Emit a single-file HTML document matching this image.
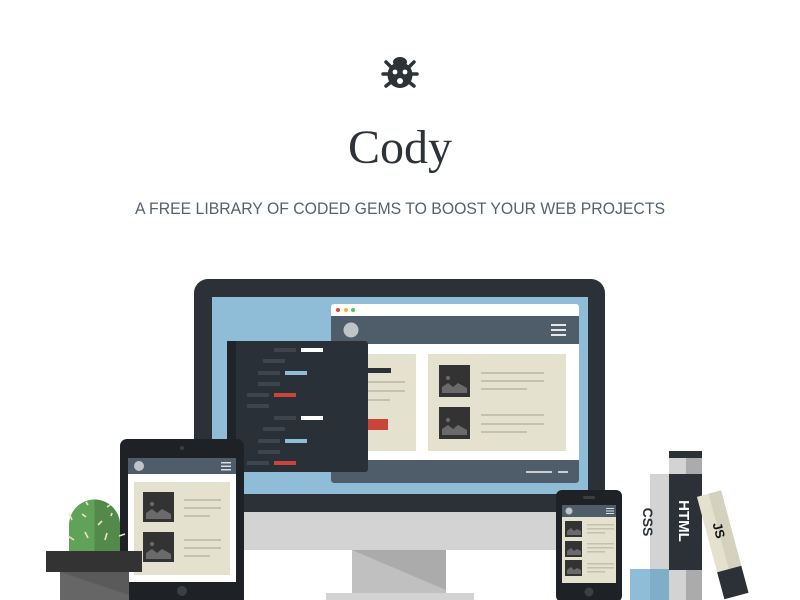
<!DOCTYPE html>
<html><head><meta charset="utf-8"><style>
html,body{margin:0;padding:0;background:#fff;width:800px;height:600px;overflow:hidden}
svg{display:block}
</style></head><body>
<svg width="800" height="600" viewBox="0 0 800 600" xmlns="http://www.w3.org/2000/svg">
<!-- bug icon -->
<g fill="#2d3339" stroke="#2d3339">
<ellipse cx="400" cy="62" rx="7" ry="5" stroke="none"/>
<ellipse cx="400" cy="75" rx="12.5" ry="13" stroke="none"/>
<g stroke-width="3.5" stroke-linecap="round">
<line x1="383" y1="74" x2="417" y2="74"/>
<line x1="386" y1="62" x2="391" y2="67"/><line x1="414" y1="62" x2="409" y2="67"/>
<line x1="386" y1="86" x2="391" y2="82"/><line x1="414" y1="86" x2="409" y2="82"/>
</g>
</g>
<circle cx="395" cy="72" r="2.4" fill="#fff"/><circle cx="405" cy="72" r="2.4" fill="#fff"/><circle cx="400" cy="81" r="3" fill="#fff"/>
<text x="400" y="163" text-anchor="middle" font-family="Liberation Serif, serif" font-size="48" fill="#2d3339">Cody</text>
<text x="135" y="214" textLength="530" lengthAdjust="spacingAndGlyphs" font-family="Liberation Sans, sans-serif" font-size="17" fill="#55616d">A FREE LIBRARY OF CODED GEMS TO BOOST YOUR WEB PROJECTS</text>

<!-- monitor -->
<rect x="326" y="593" width="148" height="7" fill="#d3d3d3"/>
<rect x="352" y="550" width="94" height="43" fill="#c0c0c0"/>
<polygon points="352,550 446,550 446,590" fill="#ababab"/>
<path d="M194,550 V293 a14,14 0 0 1 14,-14 H591 a14,14 0 0 1 14,14 V550 Z" fill="#2b3137"/>
<rect x="194" y="512" width="411" height="38" fill="#d3d3d3"/>
<rect x="212" y="297" width="376" height="197" fill="#8fbdd8"/>
<!-- browser -->
<rect x="331" y="304" width="248" height="179" rx="3" fill="#fff"/>
<circle cx="338" cy="310" r="2" fill="#e0463e"/><circle cx="346" cy="310" r="2" fill="#e8c02f"/><circle cx="353" cy="310" r="2" fill="#5fc04e"/>
<rect x="331" y="316" width="248" height="28" fill="#4f5d6b"/>
<circle cx="351" cy="330" r="7.5" fill="#bfc4c8"/>
<g fill="#e6e6e6"><rect x="551" y="324" width="15" height="2"/><rect x="551" y="329" width="15" height="2"/><rect x="551" y="334" width="15" height="2"/></g>
<path d="M331,460 H579 V480 a3,3 0 0 1 -3,3 H334 a3,3 0 0 1 -3,-3 Z" fill="#4f5d6b"/>
<rect x="526" y="471" width="26" height="2" fill="#c8cdd2"/><rect x="558" y="471" width="10" height="2" fill="#c8cdd2"/>
<rect x="340" y="354" width="76" height="97" fill="#e5e1cf"/>
<rect x="368" y="368" width="23" height="5" fill="#2b3137"/>
<g fill="#c4c0b2"><rect x="368" y="381" width="37" height="2"/><rect x="368" y="390" width="37" height="2"/><rect x="368" y="399" width="22" height="2"/></g>
<rect x="368" y="419" width="20" height="11" fill="#c9453a"/>
<rect x="428" y="354" width="138" height="97" fill="#e5e1cf"/>
<g id="img"><rect x="439" y="365" width="31" height="32" fill="#333"/><circle cx="448" cy="378" r="2" fill="#6a6a6a"/><path d="M442,393 V387 l6,-4 5,4 5,-4 9,5 V393 Z" fill="#6a6a6a"/></g>
<use href="#img" y="42"/>
<g fill="#c4c0b2"><rect x="481" y="372" width="63" height="2"/><rect x="481" y="380" width="63" height="2"/><rect x="481" y="388" width="46" height="2"/>
<rect x="481" y="414" width="63" height="2"/><rect x="481" y="423" width="63" height="2"/><rect x="481" y="431" width="46" height="2"/></g>
<!-- code -->
<rect x="227" y="341" width="141" height="131" rx="3" fill="#2a3038"/>
<rect x="227" y="341" width="9" height="131" fill="#1f2429"/>
<g fill="#3e454d"><rect x="274" y="348" width="22" height="4"/><rect x="263" y="359" width="22" height="4"/><rect x="258" y="371" width="22" height="4"/><rect x="258" y="382" width="22" height="4"/><rect x="247" y="393" width="22" height="4"/><rect x="247" y="404" width="22" height="4"/>
<rect x="274" y="416" width="22" height="4"/><rect x="263" y="427" width="22" height="4"/><rect x="258" y="439" width="22" height="4"/><rect x="258" y="450" width="22" height="4"/><rect x="247" y="461" width="22" height="4"/></g>
<rect x="301" y="348" width="22" height="4" fill="#fff"/><rect x="285" y="371" width="22" height="4" fill="#8fbdd8"/><rect x="274" y="393" width="22" height="4" fill="#c9453a"/>
<rect x="301" y="416" width="22" height="4" fill="#fff"/><rect x="285" y="439" width="22" height="4" fill="#8fbdd8"/><rect x="274" y="461" width="22" height="4" fill="#c9453a"/>

<!-- tablet -->
<rect x="120" y="439" width="124" height="170" rx="7" fill="#1e2226"/>
<circle cx="182" cy="448" r="2" fill="#3a3f44"/>
<rect x="128" y="458" width="108" height="124" fill="#fff"/>
<rect x="128" y="458" width="108" height="16" fill="#4f5d6b"/>
<circle cx="139" cy="466" r="5" fill="#bfc4c8"/>
<g fill="#d9dde0"><rect x="221" y="462" width="10" height="1.5"/><rect x="221" y="465.5" width="10" height="1.5"/><rect x="221" y="469" width="10" height="1.5"/></g>
<rect x="134" y="482" width="96" height="93" fill="#e5e1cf"/>
<g id="timg"><rect x="143" y="492" width="31" height="30" fill="#333"/><circle cx="152" cy="504" r="2" fill="#6a6a6a"/><path d="M146,519 V513 l6,-4 5,4 5,-4 9,5 V519 Z" fill="#6a6a6a"/></g>
<use href="#timg" y="40"/>
<g fill="#c4c0b2"><rect x="184" y="499" width="37" height="2"/><rect x="184" y="507" width="37" height="2"/><rect x="184" y="515" width="26" height="2"/>
<rect x="184" y="539" width="37" height="2"/><rect x="184" y="547" width="37" height="2"/><rect x="184" y="555" width="26" height="2"/></g>
<circle cx="182" cy="591" r="5" fill="#3a3f44"/>

<!-- cactus -->
<path d="M69,551 V525 a25.5,25.5 0 0 1 51,0 V551 Z" fill="#61a259"/>
<path d="M94.5,499.5 a25.5,25.5 0 0 1 25.5,25.5 V551 H94.5 Z" fill="#538a4c"/>
<g stroke="#ece4c8" stroke-width="1.6"><line x1="82" y1="514" x2="86" y2="517"/><line x1="98" y1="525" x2="102" y2="521"/><line x1="85" y1="532" x2="88" y2="538"/><line x1="107" y1="507" x2="110" y2="505"/><line x1="105" y1="540" x2="107" y2="533"/><line x1="111" y1="516" x2="112" y2="513"/><line x1="68" y1="536" x2="74" y2="540"/><line x1="69" y1="513" x2="72" y2="520"/><line x1="119" y1="536" x2="125" y2="534"/><line x1="86" y1="502" x2="88" y2="505"/></g>
<rect x="60" y="572" width="69" height="28" fill="#666"/>
<polygon points="60,572 129,572 129,595" fill="#5a5a5a"/>
<rect x="46" y="551" width="96" height="21" fill="#333"/>

<!-- phone -->
<rect x="556" y="490" width="66" height="112" rx="6" fill="#1e2226"/>
<rect x="583" y="496" width="12" height="3" rx="1.5" fill="#3a3f44"/>
<rect x="562" y="505" width="54" height="78" fill="#e5e1cf"/>
<rect x="562" y="505" width="54" height="12" fill="#4f5d6b"/>
<circle cx="569" cy="511" r="3.5" fill="#bfc4c8"/>
<g fill="#d9dde0"><rect x="606" y="508" width="8" height="1"/><rect x="606" y="510.5" width="8" height="1"/><rect x="606" y="513" width="8" height="1"/></g>
<g id="pimg"><rect x="565" y="521" width="17" height="16" fill="#333"/><path d="M567,535 V531 l4,-3 3,3 3,-2 4,2 V535 Z" fill="#6a6a6a"/></g>
<use href="#pimg" y="20"/><use href="#pimg" y="39"/>
<g fill="#c4c0b2"><rect x="587" y="524" width="27" height="1.5"/><rect x="587" y="528" width="27" height="1.5"/><rect x="587" y="532" width="18" height="1.5"/>
<rect x="587" y="543" width="27" height="1.5"/><rect x="587" y="547" width="27" height="1.5"/><rect x="587" y="551" width="18" height="1.5"/>
<rect x="587" y="563" width="27" height="1.5"/><rect x="587" y="567" width="27" height="1.5"/><rect x="587" y="571" width="18" height="1.5"/></g>
<circle cx="589" cy="592" r="4.5" fill="#3a3f44"/>

<!-- books -->
<rect x="650" y="474" width="19" height="96" fill="#d3d3d3"/>
<text transform="translate(643,522) rotate(90)" text-anchor="middle" font-family="Liberation Sans, sans-serif" font-weight="bold" font-size="14" fill="#2b3137">CSS</text>
<rect x="630" y="569" width="39" height="31" fill="#8fbdd8"/><rect x="650" y="569" width="19" height="31" fill="#80adc7"/>
<rect x="669" y="451" width="33" height="149" fill="#d3d3d3"/><rect x="686" y="451" width="16" height="149" fill="#ababab"/>
<rect x="669" y="451" width="33" height="7" fill="#2b3137"/>
<rect x="669" y="474" width="33" height="96" fill="#2b3137"/>
<text transform="translate(679,521) rotate(90)" text-anchor="middle" font-family="Liberation Sans, sans-serif" font-weight="bold" font-size="15" fill="#fff">HTML</text>
<g transform="rotate(-15 722 544)">
<rect x="710" y="492" width="25" height="78" fill="#e5e1cf"/><rect x="722" y="492" width="13" height="78" fill="#d5d1bf"/>
<rect x="710" y="570" width="25" height="28" fill="#2b3137"/>
<text transform="translate(718,530) rotate(90)" text-anchor="middle" font-family="Liberation Sans, sans-serif" font-weight="bold" font-size="13" fill="#111">JS</text>
</g>
</svg>
</body></html>
